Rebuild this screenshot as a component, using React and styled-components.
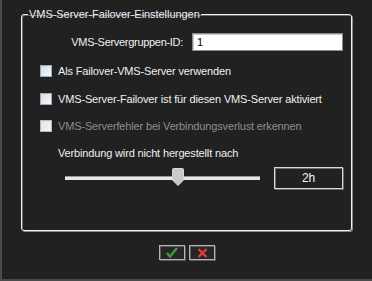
import styled, { createGlobalStyle } from "styled-components";

const GlobalStyle = createGlobalStyle`
  html, body {
    margin: 0;
    padding: 0;
    background: #212121;
  }
  body {
    font-family: "Liberation Sans", Arial, sans-serif;
    font-size: 11px;
    letter-spacing: -0.15px;
  }
`;

const Window = styled.div`
  width: 372px;
  height: 281px;
  box-sizing: border-box;
  background: #212121;
  border-left: 2px solid #4a4a4a;
  border-bottom: 2px solid #4a4a4a;
  padding: 7px 0 0 19px;
  display: flex;
  flex-direction: column;
  overflow: hidden;
`;

const Group = styled.fieldset`
  margin: 0;
  width: 331px;
  box-sizing: border-box;
  border: 1px solid #f2f2f2;
  border-radius: 3px;
  box-shadow: 1px 1px 0 #8a8a8a, inset 1px 1px 0 #6a6a6a;
  padding: 12px 8px 41px 18px;
  display: flex;
  flex-direction: column;
`;

const Legend = styled.legend`
  color: #e8eef6;
  padding: 0 1px;
  margin-left: -12px;
  line-height: 14px;
  letter-spacing: -0.05px;
`;

const FormRow = styled.div`
  display: flex;
  align-items: center;
  height: 18px;
  gap: 9px;
`;

const FieldLabel = styled.label`
  width: 143px;
  text-align: right;
  color: #f0f0f0;
  white-space: nowrap;
  letter-spacing: -0.3px;
`;

const TextInput = styled.input`
  width: 151px;
  height: 18px;
  box-sizing: border-box;
  border: 1px solid #8a8a8a;
  box-shadow: inset 1px 1px 0 #c8c8c8;
  background: #fff;
  color: #000;
  font-family: inherit;
  font-size: 11px;
  padding: 0 0 0 4px;
  outline: none;
`;

const CheckRow = styled.label`
  display: flex;
  align-items: center;
  gap: 6px;
  height: 14px;
  white-space: nowrap;
  margin-top: ${(p) => p.$top}px;
  color: ${(p) => (p.$disabled ? "#8e8e8e" : "#f0f0f0")};
`;

const Box = styled.span`
  flex: none;
  width: 12px;
  height: 12px;
  box-sizing: border-box;
  border: 1px solid ${(p) => (p.$disabled ? "#b8b8b8" : "#9aaabf")};
  background: ${(p) =>
    p.$disabled
      ? "linear-gradient(135deg, #e4e4e4, #f6f6f6)"
      : "linear-gradient(135deg, #d6dbe2, #f8f9fa)"};
`;

const Caption = styled.div`
  margin-top: 13px;
  margin-left: 18px;
  height: 14px;
  line-height: 14px;
  color: #f0f0f0;
`;

const SliderRow = styled.div`
  margin-top: 7px;
  display: flex;
  align-items: center;
  height: 22px;
`;

const Track = styled.div`
  position: relative;
  margin-left: 25px;
  width: 195px;
  height: 4px;
  background: #e6e6e6;
  border-top: 1px solid #9a9a9a;
  box-sizing: border-box;
`;

const Thumb = styled.svg`
  position: absolute;
  top: -9px;
  margin-left: -6px;
`;

const ValueBox = styled.div`
  margin-left: 14px;
  width: 69px;
  height: 22px;
  box-sizing: border-box;
  border: 1px solid #d8d8d8;
  box-shadow: inset 1px 1px 0 #707070, 1px 1px 0 #6a6a6a;
  display: flex;
  align-items: center;
  justify-content: center;
  color: #f6f6f6;
  font-size: 12px;
`;

const Buttons = styled.div`
  margin-top: 14px;
  margin-left: -19px;
  width: 370px;
  display: flex;
  justify-content: center;
  gap: 4px;
`;

const IconButton = styled.button`
  width: 26px;
  height: 15px;
  box-sizing: border-box;
  padding: 0;
  background: #262626;
  border: 1px solid #b4b4b4;
  box-shadow: 1px 1px 0 #5a5a5a, inset 1px 1px 0 #5a5a5a;
  display: flex;
  align-items: center;
  justify-content: center;
`;

const Check = ({ label, top, disabled }) => (
  <CheckRow $top={top} $disabled={disabled}>
    <Box $disabled={disabled} />
    {label}
  </CheckRow>
);

export default function App() {
  const pos = 58;
  return (
    <>
      <GlobalStyle />
      <Window>
        <Group>
          <Legend>VMS-Server-Failover-Einstellungen</Legend>
          <FormRow>
            <FieldLabel>VMS-Servergruppen-ID:</FieldLabel>
            <TextInput defaultValue="1" />
          </FormRow>
          <Check top={13} label="Als Failover-VMS-Server verwenden" />
          <Check top={14} label="VMS-Server-Failover ist für diesen VMS-Server aktiviert" />
          <Check top={13} disabled label="VMS-Serverfehler bei Verbindungsverlust erkennen" />
          <Caption>Verbindung wird nicht hergestellt nach</Caption>
          <SliderRow>
            <Track>
              <Thumb style={{ left: `${pos}%` }} width="12" height="18" viewBox="0 0 12 18">
                <path d="M0.5 1.5 Q0.5 0.5 1.5 0.5 H10.5 Q11.5 0.5 11.5 1.5 V12 L6 17.5 L0.5 12 Z" fill="#c9c9c9" stroke="#d8d8d8" />
              </Thumb>
            </Track>
            <ValueBox>2h</ValueBox>
          </SliderRow>
        </Group>
        <Buttons>
          <IconButton>
            <svg width="12" height="11" viewBox="0 0 12 11">
              <path d="M1 6 L4 9.5 L11 1" fill="none" stroke="#3c9c3c" strokeWidth="2.4" />
            </svg>
          </IconButton>
          <IconButton>
            <svg width="11" height="10" viewBox="0 0 11 10">
              <path d="M1.5 1 L9.5 9 M9.5 1 L1.5 9" fill="none" stroke="#e23b3b" strokeWidth="2.4" />
            </svg>
          </IconButton>
        </Buttons>
      </Window>
    </>
  );
}
